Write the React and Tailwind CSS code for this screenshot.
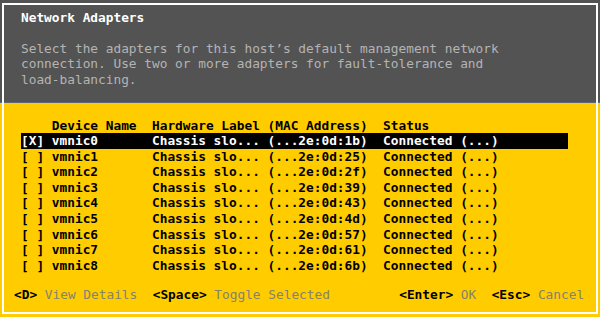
import React from 'react';

const nics = [
  { name: 'vmnic0', mac: '1b', selected: true },
  { name: 'vmnic1', mac: '25' },
  { name: 'vmnic2', mac: '2f' },
  { name: 'vmnic3', mac: '39' },
  { name: 'vmnic4', mac: '43' },
  { name: 'vmnic5', mac: '4d' },
  { name: 'vmnic6', mac: '57' },
  { name: 'vmnic7', mac: '61' },
  { name: 'vmnic8', mac: '6b' },
];

const mono = "font-['DejaVu_Sans_Mono','Liberation_Mono',monospace] text-[12.8px] leading-[15.6px]";

function Row({ nic }) {
  return (
    <div className={`grid grid-cols-[17ch_30ch_24ch] w-[71ch] whitespace-pre font-bold ${nic.selected ? 'bg-black text-white' : 'text-black'}`}>
      <span>{nic.selected ? '[X]' : '[ ]'} {nic.name}</span>
      <span>Chassis slo... (...2e:0d:{nic.mac})</span>
      <span>Connected (...)</span>
    </div>
  );
}

export default function App() {
  return (
    <div className={`relative w-[600px] h-[317px] flex flex-col overflow-hidden bg-[#ffcc00] ${mono}`}>
      <div className="h-[103px] bg-[#535353] border-b border-[#5d6878] pt-[9.5px] pl-[21px]">
        <div className="text-white font-bold">Network Adapters</div>
        <div className="mt-[15.6px] text-[#b4b4b4] whitespace-pre">
          <div>Select the adapters for this host’s default management network</div>
          <div>connection. Use two or more adapters for fault-tolerance and</div>
          <div>load-balancing.</div>
        </div>
      </div>

      <div className="flex-1 flex flex-col pt-[14.5px]">
        <div className="pl-[21px]">
          <div className="grid grid-cols-[17ch_30ch_24ch] w-[71ch] whitespace-pre font-bold text-black">
            <span>    Device Name</span>
            <span>Hardware Label (MAC Address)</span>
            <span>Status</span>
          </div>
          {nics.map((nic) => (
            <Row key={nic.name} nic={nic} />
          ))}
        </div>

        <div className="mt-[14px] pl-[14px] flex justify-between w-[calc(74ch+14px)] whitespace-pre">
          <div>
            <span className="font-bold text-black">&lt;D&gt;</span>
            <span className="text-[#85826f]"> View Details  </span>
            <span className="font-bold text-black">&lt;Space&gt;</span>
            <span className="text-[#85826f]"> Toggle Selected</span>
          </div>
          <div>
            <span className="font-bold text-black">&lt;Enter&gt;</span>
            <span className="text-[#85826f]"> OK  </span>
            <span className="font-bold text-black">&lt;Esc&gt;</span>
            <span className="text-[#85826f]"> Cancel</span>
          </div>
        </div>
      </div>

      <div className="absolute top-[3px] left-[2px] right-[2px] bottom-[3px] border-2 border-white pointer-events-none" />
    </div>
  );
}
